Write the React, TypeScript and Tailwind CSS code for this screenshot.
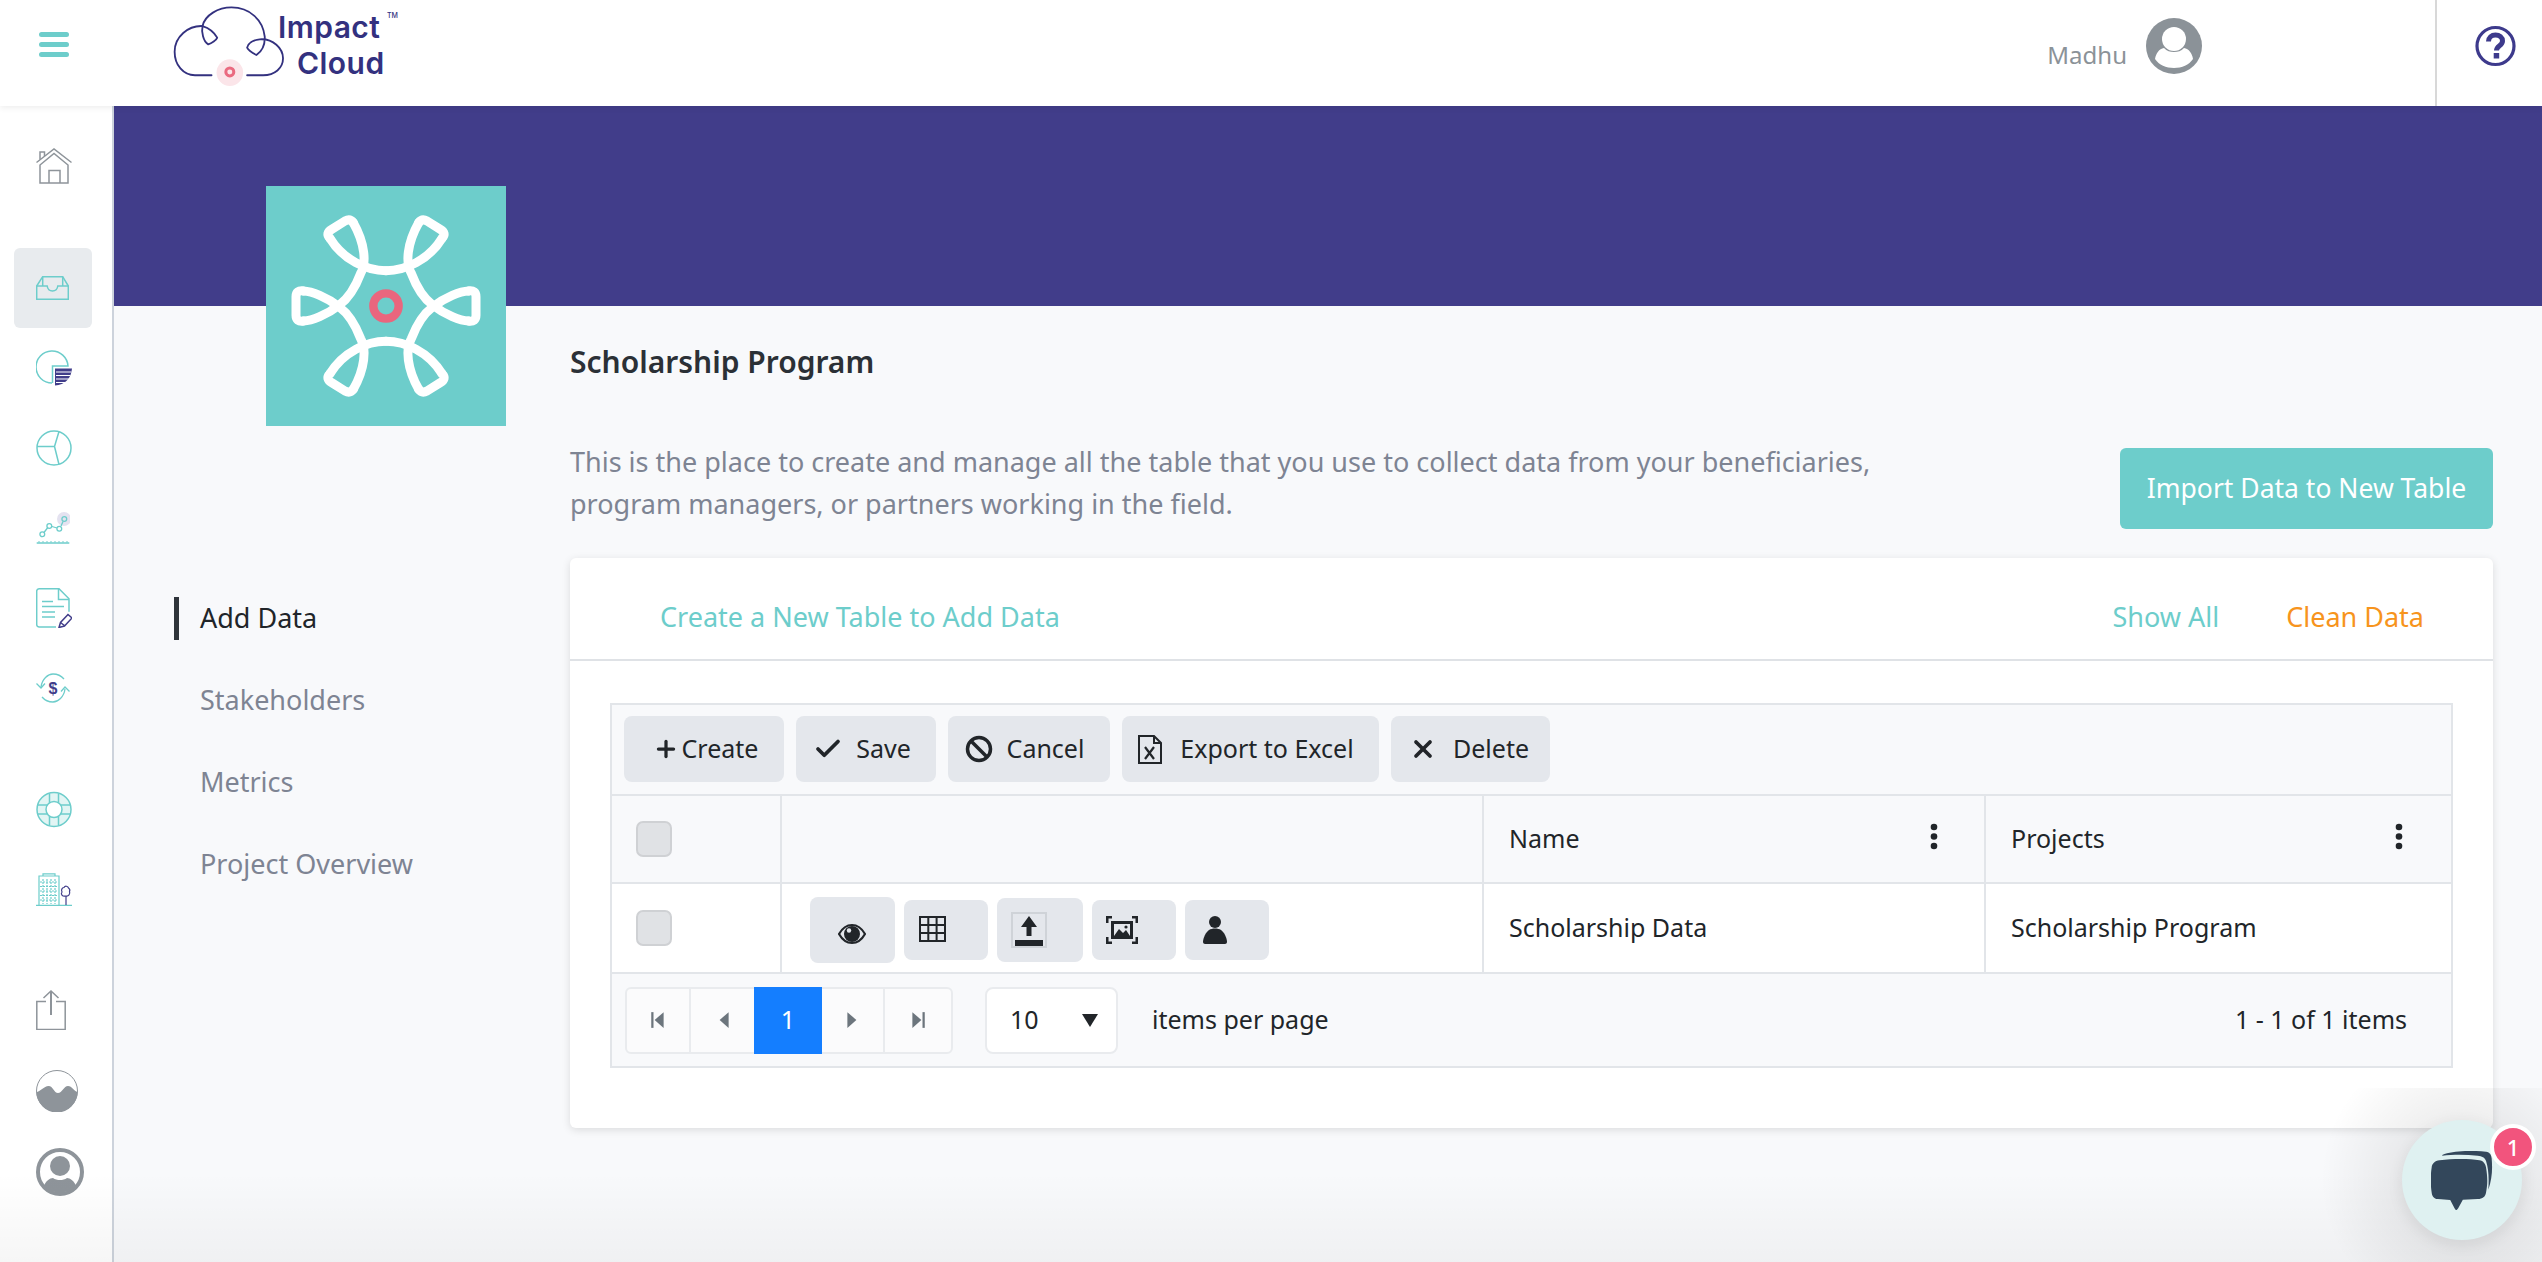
import { Check, Plus, X } from "lucide-react";
import type { ReactNode } from "react";

const TEAL = "#6dcdcb";
const NAVY = "#413d8a";
const GRAY = "#8e949a";

const HomeIcon = () => (
  <svg width="36" height="36" viewBox="0 0 36 36" fill="none" stroke={GRAY} strokeWidth="1.5">
    <path d="M0.5 14.5 18 1l17.5 13.5" />
    <path d="M4 35V17L18 5.5 32 17v18z" />
    <path d="M13 35V22.5h11V35" />
    <path d="M4 11.5V4h4.5v4" />
  </svg>
);

const InboxIcon = () => (
  <svg width="33" height="24" viewBox="0 0 33 24" fill="none" stroke={TEAL} strokeWidth="1.5">
    <path d="M.7 10 6.7.7h20L32.3 10" />
    <path d="M.7 10h10.5c.4 3 2.5 5 5.3 5s4.9-2 5.3-5h10.5v13.3H.7z" />
    <path d="M6.7.7V10M26.7.7V10" />
  </svg>
);

const PieDocIcon = () => (
  <svg width="36" height="36" viewBox="0 0 36 36" fill="none">
    <path d="M16 33A16 16 0 1 1 32 16H16.5V33" stroke={TEAL} strokeWidth="1.5" />
    <path d="M19 18.5h17C35 29 29 34.5 19 35.5z" fill={NAVY} />
    <path d="M20 22h15.5M20 25.5h14.5M20 29h13M20 32.5h9" stroke="#fff" strokeWidth="1.2" />
  </svg>
);

const PieIcon = () => (
  <svg width="36" height="36" viewBox="0 0 36 36" fill="none" stroke={TEAL} strokeWidth="1.5">
    <circle cx="18" cy="18" r="17" />
    <path d="M1 16.5h17.5L23 1.5M18.5 16.5 23 34.5" />
  </svg>
);

const TrendIcon = () => (
  <svg width="34" height="32" viewBox="0 0 34 32" fill="none" stroke={TEAL} strokeWidth="1.3">
    <circle cx="28" cy="7" r="7" fill="#e4e2f0" stroke="none" />
    <path d="m8 20.5 3.8-5M16 14.5l5 1.5M25 14l2-4.5" />
    <circle cx="6.3" cy="22.3" r="2.4" />
    <circle cx="13.3" cy="14" r="2.4" />
    <circle cx="23.3" cy="16.7" r="2.4" />
    <circle cx="28.3" cy="7" r="2.4" />
    <path d="M.7 31h32.6" strokeWidth="1.6" />
    <path d="M3 29v1.5M7 29v1.5M11 29v1.5M15 29v1.5M19 29v1.5M23 29v1.5M27 29v1.5M31 29v1.5" strokeWidth="1" />
  </svg>
);

const DocIcon = () => (
  <svg width="36" height="40" viewBox="0 0 36 40" fill="none" stroke={TEAL} strokeWidth="1.5">
    <path d="M20 39H3a2.5 2.5 0 0 1-2.3-2.5V3A2.5 2.5 0 0 1 3 .8h20l10 10v13" />
    <path d="M22.5 1v10.5h10.5" />
    <path d="M6 13.5h11M6 18.5h22M6 24h13M6 29h13" />
    <path d="m23 39.5 1.5-5 7.5-8 4 3.5-7.5 8zM24.5 34.5l4.5 3.5" stroke={NAVY} strokeWidth="1.5" />
  </svg>
);

const SwapIcon = () => (
  <svg width="34" height="30" viewBox="0 0 34 30" fill="none" stroke={TEAL} strokeWidth="1.3">
    <path d="M5 14C6 6 12 1 17 1c4.5 0 8 1.5 11 5" />
    <path d="M29 16c-1 8-7 13-12 13-4.5 0-8-1.5-11-5" />
    <path d="M.5 10.5 5 15l4-4.5M25 18.5 29 14l4.5 4.5" />
    <text x="17" y="20.5" textAnchor="middle" fontSize="16" fontWeight="700" fill={NAVY} stroke="none" fontFamily="'Liberation Sans', sans-serif">
      $
    </text>
  </svg>
);

const BuoyIcon = () => (
  <svg width="36" height="37" viewBox="0 0 36 36" fill="none" stroke={TEAL} strokeWidth="1.5">
    <circle cx="18" cy="18" r="17" fill="#e2f5f4" />
    <path d="M13.5 2v10M22.5 2v10M13.5 24v10M22.5 24v10M2 13.5h10M2 22.5h10M24 13.5h10M24 22.5h10" />
    <circle cx="18" cy="18" r="8" fill="#fff" />
  </svg>
);

const BuildingIcon = () => (
  <svg width="36" height="33" viewBox="0 0 36 33" fill="none" stroke={TEAL} strokeWidth="1.2">
    <path d="M0 32.4h36" strokeWidth="1.4" />
    <path d="M3 32V3h20v29M7 3V.8h12V3" />
    <path d="M7 6v25M11 6v25M15 6v25M19 6v25M4 9h18M4 13.5h18M4 18h18M4 22.5h18M4 27h18" strokeDasharray="2 1" />
    <path d="M30 32V23" stroke={NAVY} />
    <path d="M30 23c-4 1-5.5-2-4-4-1.5-3 1-4.5 2-4.5 1-2 4-1.5 4.5.5 1.5 1 1.5 2.5 1 3.5 1 2.5-1 5-3.5 4.5z" stroke={NAVY} fill="#fff" />
  </svg>
);

const ShareIcon = () => (
  <svg width="30" height="40" viewBox="0 0 30 40" fill="none" stroke={GRAY} strokeWidth="1.5">
    <path d="M10 11.5H.8v28h28.4v-28H20" />
    <path d="M15 1v24" strokeWidth="2" />
    <path d="M7.5 8 15 1l7.5 7" />
  </svg>
);

const WaveIcon = () => (
  <svg width="42" height="42" viewBox="0 0 42 42" fill="none">
    <circle cx="21" cy="21" r="20.5" stroke={GRAY} strokeWidth="1" />
    <path d="M.5 22C4 22 8 16 12.6 16 17 16 18 23 22 23 26 23 28 16 32 16 36 16 38 21 41.5 22A20.5 20.5 0 0 1 .5 22z" fill={GRAY} />
  </svg>
);

const UserRingIcon = () => (
  <svg width="48" height="48" viewBox="0 0 48 48" fill="none">
    <circle cx="24" cy="24" r="22" stroke={GRAY} strokeWidth="4" />
    <circle cx="24" cy="18" r="10" fill={GRAY} />
    <path d="M8 38c1.5-5 6-8 9-8 2 1.5 4.5 2 7 2s5-.5 7-2c3 0 7.5 3 9 8-4 4.5-10 6.5-16 6.5S12 42.5 8 38z" fill={GRAY} />
  </svg>
);

const ImpactLogo = () => (
  <div className="flex items-start h-full">
    <svg width="133" height="90" viewBox="0 0 400 270" fill="none" stroke="#33317f" strokeWidth="5.5" strokeLinecap="round" strokeLinejoin="round" className="shrink-0">
      <path d="M155 226H105C70 226 44 195 44 155 44 110 85 76 128 78" />
      <path d="M128 78C135 45 175 22 215 22 270 22 310 60 315 110 316 135 305 155 290 165 280 160 265 150 262 143 265 130 280 120 300 118 340 115 370 145 370 175 370 205 345 226 310 226H262" />
      <path d="M128 78C124 95 130 125 145 133 155 130 170 120 172 113 165 100 150 85 128 78Z" />
      <circle cx="210" cy="218" r="40" fill="#fbe5e9" stroke="none" />
      <circle cx="210" cy="216" r="12" stroke="#ea6a80" strokeWidth="9" />
    </svg>
    <div className="relative -ml-[15px] mt-[9px] w-[118px] font-['Inter',sans-serif] font-semibold text-[#33317f] text-[30px] leading-[36px] tracking-[0.015em]">
      <div>Impact</div>
      <div className="pl-[19px]">Cloud</div>
      <span className="absolute left-[109px] top-[3px] text-[7px] leading-[8px] font-medium tracking-normal">TM</span>
    </div>
  </div>
);

const MarkIcon = () => {
  const strand = [
    "M240 205C280 270 350 302 408 302",
    "M240 611C280 546 350 514 408 514",
    "M310 158C345 220 350 280 332 310C315 355 295 385 268 405C230 435 185 452 160 453",
    "M310 658C345 596 350 536 332 506C315 461 295 431 268 411C230 381 185 364 160 363",
    "M310 158Q300 145 285 153L245 178Q225 190 240 205",
    "M310 658Q300 671 285 663L245 638Q225 626 240 611",
    "M160 363Q138 360 138 380V436Q138 456 160 453",
  ];
  return (
    <svg width="240" height="240" viewBox="48 48 720 720" fill="none">
      <g stroke="#fff" strokeWidth="27" strokeLinecap="round" strokeLinejoin="round">
        {strand.map((d) => (
          <path key={d} d={d} />
        ))}
        <g transform="translate(816 0) scale(-1 1)">
          {strand.map((d) => (
            <path key={d} d={d} />
          ))}
        </g>
      </g>
      <circle cx="408" cy="408" r="38" stroke="#e9667e" strokeWidth="25" />
    </svg>
  );
};

const railTop: { icon: ReactNode; active?: boolean }[] = [
  { icon: <InboxIcon />, active: true },
  { icon: <PieDocIcon /> },
  { icon: <PieIcon /> },
  { icon: <TrendIcon /> },
  { icon: <DocIcon /> },
  { icon: <SwapIcon /> },
];

const Sidebar = () => (
  <aside className="w-[114px] shrink-0 bg-white border-r-2 border-[#cdd3dc] flex flex-col items-stretch">
    <div className="h-[142px] pt-[42px] pl-[36px]">
      <HomeIcon />
    </div>
    {railTop.map((r, i) => (
      <div
        key={i}
        className={`h-[80px] w-[78px] ml-[14px] pl-[22px] rounded-[6px] flex items-center ${r.active ? "bg-[#e8ebee]" : ""}`}
      >
        {r.icon}
      </div>
    ))}
    <div className="h-[41px]" />
    <div className="h-[80px] ml-[36px] flex items-center"><BuoyIcon /></div>
    <div className="h-[80px] ml-[36px] flex items-center"><BuildingIcon /></div>
    <div className="h-[41px]" />
    <div className="h-[80px] ml-[36px] flex items-center"><ShareIcon /></div>
    <div className="h-[80px] mt-[1px] ml-[36px] flex items-center"><WaveIcon /></div>
    <div className="h-[80px] mt-[1px] ml-[36px] flex items-center"><UserRingIcon /></div>
  </aside>
);

const ToolButton = ({ w, gap, icon, label }: { w: string; gap: string; icon: ReactNode; label: string }) => (
  <button className={`${w} ${gap} h-[66px] rounded-[8px] bg-[#e4e7ec] flex items-center justify-center text-[25px] text-[#212529]`}>
    {icon}
    <span>{label}</span>
  </button>
);

const ActionBox = ({ w, h, children }: { w: string; h: string; children: ReactNode }) => (
  <div className={`${w} ${h} rounded-[8px] bg-[#e4e7ec] flex items-center`}>{children}</div>
);

const Kebab = () => (
  <svg width="8" height="27" viewBox="0 0 8 27" fill="#212529">
    <circle cx="4" cy="4" r="3.3" />
    <circle cx="4" cy="13.5" r="3.3" />
    <circle cx="4" cy="23" r="3.3" />
  </svg>
);

const Checkbox = () => <div className="w-[36px] h-[36px] rounded-[7px] bg-[#e0e2e5] border-2 border-[#cfd1d4]" />;

const PagerTri = ({ dir, bar }: { dir: "l" | "r"; bar?: boolean }) => (
  <svg width="18" height="18" viewBox="0 0 16 16" fill="#6c757d">
    {dir === "l" ? <path d="M13 1v14L5 8z" /> : <path d="M3 1v14l8-7z" />}
    {bar && (dir === "l" ? <path d="M2 1h2v14H2z" /> : <path d="M12 1h2v14h-2z" />)}
  </svg>
);

const DataGrid = () => (
  <div className="border-2 border-[#e2e5e9] bg-[#f8f9fb] text-[25px] text-[#212529]">
    <div className="h-[91px] border-b-2 border-[#e2e5e9] flex gap-[12px] pl-[12px] pt-[11px]">
      <ToolButton w="w-[160px] pl-[3px]" gap="gap-[3px]" label="Create" icon={<Plus size={26} strokeWidth={3} />} />
      <ToolButton w="w-[140px] pr-[8px]" gap="gap-[13px]" label="Save" icon={<Check size={30} strokeWidth={3} />} />
      <ToolButton
        w="w-[162px] pr-[9px]"
        gap="gap-[14px]"
        label="Cancel"
        icon={
          <svg width="28" height="28" viewBox="0 0 28 28" fill="none" stroke="#212529" strokeWidth="3.5">
            <circle cx="14" cy="14" r="11.5" />
            <path d="m6 6 16 16" />
          </svg>
        }
      />
      <ToolButton
        w="w-[257px] pr-[9px]"
        gap="gap-[18px]"
        label="Export to Excel"
        icon={
          <svg width="24" height="29" viewBox="0 0 24 29" fill="none" stroke="#212529" strokeWidth="2">
            <path d="M1 1h15l7 7v20H1z" />
            <path d="M16 1v7h7" />
            <path d="m7 12 9 12M16 12l-9 12" strokeWidth="2.2" />
          </svg>
        }
      />
      <ToolButton w="w-[159px] pr-[3px]" gap="gap-[16px]" label="Delete" icon={<X size={28} strokeWidth={3.2} />} />
    </div>

    <div className="h-[88px] border-b-2 border-[#e2e5e9] grid grid-cols-[170px_702px_502px_1fr]">
      <div className="border-r-2 border-[#e2e5e9] flex items-center pl-[24px]"><Checkbox /></div>
      <div className="border-r-2 border-[#e2e5e9]" />
      <div className="border-r-2 border-[#e2e5e9] flex items-center justify-between pl-[25px] pr-[46px]">
        <span>Name</span>
        <span className="pb-[6px]"><Kebab /></span>
      </div>
      <div className="flex items-center justify-between pl-[25px] pr-[48px]">
        <span>Projects</span>
        <span className="pb-[6px]"><Kebab /></span>
      </div>
    </div>

    <div className="h-[90px] border-b-2 border-[#e2e5e9] bg-white grid grid-cols-[170px_702px_502px_1fr]">
      <div className="border-r-2 border-[#e2e5e9] flex items-center pl-[24px]"><Checkbox /></div>
      <div className="border-r-2 border-[#e2e5e9] flex items-center pl-[28px] pt-[3px] gap-[9px]">
        <ActionBox w="w-[85px]" h="h-[66px]">
          <svg width="28" height="24" viewBox="0 0 28 24" className="ml-[28px] mt-[8px]">
            <path d="M1 12C5 5 9 3 14 3s9 2 13 9c-4 7-8 9-13 9S5 19 1 12z" fill="none" stroke="#212529" strokeWidth="2.2" />
            <circle cx="14" cy="12" r="8" fill="#212529" />
            <circle cx="11" cy="8.5" r="2.2" fill="#e4e7ec" />
          </svg>
        </ActionBox>
        <ActionBox w="w-[84px]" h="h-[60px]">
          <svg width="27" height="26" viewBox="0 0 27 26" fill="none" stroke="#212529" strokeWidth="2" className="ml-[15px] -mt-[2px]">
            <path d="M1 1h25v24H1zM9.3 1v24M17.6 1v24M1 9h25M1 17h25" />
          </svg>
        </ActionBox>
        <ActionBox w="w-[86px]" h="h-[64px]">
          <div className="ml-[14px] w-[36px] h-[36px] border-2 border-[#cfd3d8] flex items-center justify-center">
            <svg width="30" height="32" viewBox="0 0 30 32" fill="#212529">
              <path d="M15 2 23 13h-5.5v9h-5v-9H7z" />
              <path d="M1 26h28v6H1z" />
            </svg>
          </div>
        </ActionBox>
        <ActionBox w="w-[84px]" h="h-[60px]">
          <svg width="34" height="30" viewBox="0 0 34 30" className="ml-[13px]" fill="#212529">
            <path d="M1 1h6v2.5H3.5V8H1zM33 1h-6v2.5h3.5V8H33zM1 29h6v-2.5H3.5V22H1zM33 29h-6v-2.5h3.5V22H33z" />
            <path d="M6 6h22v18H6z" />
            <path d="M9 9h16v12H9z" fill="#e4e7ec" />
            <path d="m9 21 5-7 4 4 3-3 4 6z" />
            <circle cx="21" cy="12" r="1.6" />
          </svg>
        </ActionBox>
        <ActionBox w="w-[84px]" h="h-[60px]">
          <svg width="26" height="28" viewBox="0 0 26 28" className="ml-[17px]" fill="#212529">
            <circle cx="13" cy="6" r="6" />
            <path d="M7 14c3-2 9-2 12 0 3 2 6 8 6 12 0 1-1 2-2 2H3c-1 0-2-1-2-2 0-4 3-10 6-12z" />
          </svg>
        </ActionBox>
      </div>
      <div className="border-r-2 border-[#e2e5e9] flex items-center pl-[25px]">Scholarship Data</div>
      <div className="flex items-center pl-[25px]">Scholarship Program</div>
    </div>

    <div className="h-[92px] flex items-center pl-[13px] pr-[44px]">
      <div className="flex h-[67px] border-2 border-[#e9ebee] rounded-[6px] bg-[#fbfbfc]">
        <div className="w-[64px] border-r-2 border-[#e9ebee] flex items-center justify-center"><PagerTri dir="l" bar /></div>
        <div className="w-[63px] flex items-center justify-center"><PagerTri dir="l" /></div>
        <div className="w-[68px] -my-[2px] bg-[#147eff] text-white flex items-center justify-center">1</div>
        <div className="w-[63px] border-r-2 border-[#e9ebee] flex items-center justify-center"><PagerTri dir="r" /></div>
        <div className="w-[66px] flex items-center justify-center"><PagerTri dir="r" bar /></div>
      </div>
      <div className="ml-[32px] w-[133px] h-[67px] border-2 border-[#e9ebee] rounded-[8px] bg-white flex items-center justify-between pl-[23px] pr-[18px]">
        <span>10</span>
        <svg width="16" height="13" viewBox="0 0 16 13" fill="#212529"><path d="M0 0h16L8 13z" /></svg>
      </div>
      <span className="ml-[34px]">items per page</span>
      <span className="ml-auto">1 - 1 of 1 items</span>
    </div>
  </div>
);

const App = () => {
  return (
    <div className="relative h-screen w-full overflow-hidden bg-[#f8f9fb] flex flex-col font-['Noto_Sans',sans-serif]">
      <header className="relative z-10 h-[106px] shrink-0 bg-white shadow-[0_2px_6px_rgba(0,0,0,0.07)] flex items-center">
        <div className="w-[160px] pl-[39px] flex flex-col gap-[5px] self-start pt-[32px]">
          <div className="w-[30px] h-[5px] rounded-full bg-[#6dcdcb]" />
          <div className="w-[30px] h-[5px] rounded-full bg-[#6dcdcb]" />
          <div className="w-[30px] h-[5px] rounded-full bg-[#6dcdcb]" />
        </div>
        <ImpactLogo />
        <div className="ml-auto flex items-center h-full">
          <span className="text-[24px] text-[#8b9298] pt-[3px]">Madhu</span>
          <svg width="56" height="56" viewBox="0 0 56 56" className="ml-[19px] -mt-[15px]">
            <circle cx="28" cy="28" r="28" fill="#8b9298" />
            <circle cx="28" cy="21" r="12" fill="#fff" />
            <path d="M9 41c1-6 4-10 9-11 3 3 6 4 10 4s7-1 10-4c5 1 8 5 9 11-4 6-11 9-19 9s-15-3-19-9z" fill="#fff" />
          </svg>
          <div className="ml-[233px] w-[107px] h-full border-l-2 border-[#d8d8d8] flex items-center justify-center">
            <svg width="41" height="42" viewBox="0 0 41 42" fill="none" className="-mt-[14px] ml-[11px]">
              <circle cx="20.5" cy="21" r="18.5" stroke="#3d3a8c" strokeWidth="3.2" />
              <path d="M13.5 16.5c0-4 3-6.5 7-6.5s7 2.5 7 6c0 5-6 4.5-6 9.5" stroke="#3d3a8c" strokeWidth="5" />
              <path d="M18.7 28h5.5v5.5h-5.5z" fill="#3d3a8c" />
            </svg>
          </div>
        </div>
      </header>

      <div className="flex flex-1 min-h-0">
        <Sidebar />
        <main className="flex-1 min-w-0 flex flex-col">
          <div className="h-[200px] shrink-0 bg-[#413d8a]" />
          <div className="flex flex-1">
            <div className="w-[456px] shrink-0">
              <div className="relative -mt-[120px] ml-[152px] w-[240px] h-[240px] bg-[#6dcdcb]">
                <MarkIcon />
              </div>
              <nav className="mt-[171px] ml-[60px] text-[27px] text-[#7e8493]">
                <div className="h-[43px] border-l-[5px] border-[#2f343a] pl-[21px] flex items-center text-[#212529]">Add Data</div>
                <div className="mt-[39px] h-[43px] pl-[26px] flex items-center">Stakeholders</div>
                <div className="mt-[39px] h-[43px] pl-[26px] flex items-center">Metrics</div>
                <div className="mt-[39px] h-[43px] pl-[26px] flex items-center">Project Overview</div>
              </nav>
            </div>

            <div className="w-[1923px] shrink-0">
              <h1 className="mt-[36px] h-[40px] text-[30px] leading-[40px] font-semibold text-[#2b3036]">Scholarship Program</h1>
              <div className="mt-[59px] h-[117px] flex justify-between items-start">
                <p className="w-[1340px] text-[27px] leading-[42px] text-[#7e8493]">
                  This is the place to create and manage all the table that you use to collect data from your beneficiaries, program managers, or partners working in the field.
                </p>
                <button className="mt-[7px] w-[373px] h-[81px] rounded-[6px] bg-[#6dcdcb] text-white text-[26.5px]">Import Data to New Table</button>
              </div>

              <section className="h-[570px] bg-white rounded-[6px] shadow-[0_2px_8px_rgba(0,0,0,0.12)]">
                <div className="h-[103px] border-b-2 border-[#dfe2e6] pt-[18px] pl-[90px] pr-[69px] flex items-center justify-between text-[27px]">
                  <span className="text-[#6dcdcb]">Create a New Table to Add Data</span>
                  <div className="flex gap-[67px]">
                    <span className="text-[#6dcdcb]">Show All</span>
                    <span className="text-[#f7941d]">Clean Data</span>
                  </div>
                </div>
                <div className="pt-[42px] px-[40px]">
                  <DataGrid />
                </div>
              </section>
            </div>
          </div>
        </main>
      </div>

      <div className="pointer-events-none absolute left-0 right-0 bottom-0 h-[90px] z-20 bg-gradient-to-b from-transparent to-[#00000009]" />
      <div className="pointer-events-none absolute right-0 bottom-0 w-[320px] h-[174px] z-20 bg-[radial-gradient(circle_at_240px_92px,#00000010_25%,transparent_55%)]" />

      <div className="absolute z-30 right-[20px] bottom-[22px] w-[120px] h-[120px] rounded-full bg-[#dff1f1] shadow-[0_4px_16px_rgba(0,0,0,0.08)] flex items-center justify-center">
        <svg width="62" height="59" viewBox="275 210 185 178">
          <path d="M300 238C340 233 390 233 420 238 432 240 438 248 440 260 445 290 445 310 440 335 438 348 430 354 415 355L370 357 356 383C352 390 348 390 345 383L332 358 295 355C282 354 277 345 276 335 272 310 272 285 276 260 277 248 285 240 300 238Z" fill="#33475b" />
          <path d="M308 222C340 208 400 208 440 212 452 214 456 222 457 232 460 265 458 295 447 327 449 290 448 265 440 240 436 228 428 226 415 224 380 220 340 220 308 224Z" fill="#33475b" />
        </svg>
        <div className="absolute top-[4px] -right-[14px] w-[46px] h-[46px] rounded-full bg-[#f2547d] border-[4px] border-white text-white text-[22px] font-medium flex items-center justify-center">1</div>
      </div>
    </div>
  );
};

export default App;
